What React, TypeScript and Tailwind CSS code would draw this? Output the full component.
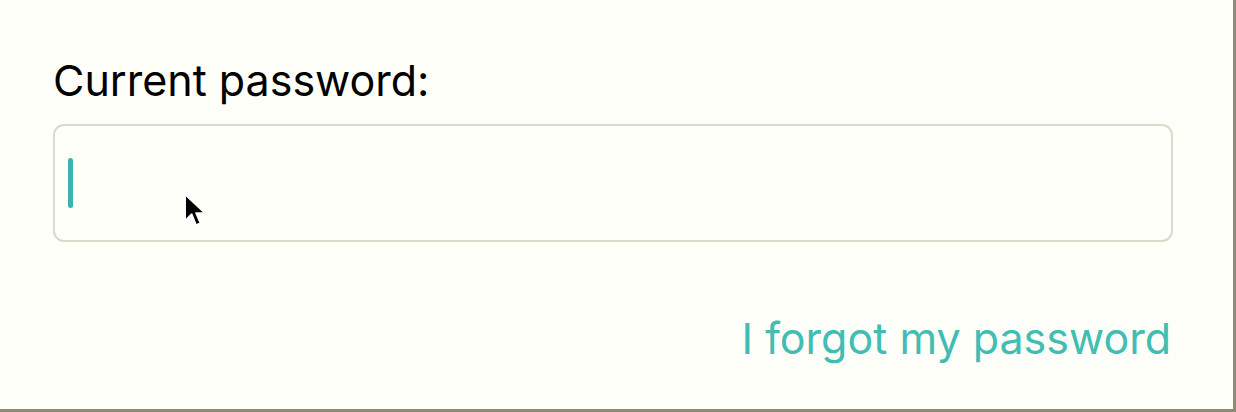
export default function App() {
  return (
    <div className="w-[1236px] h-[412px] bg-[#fffffa] border-r-[3px] border-b-[3px] border-[#8c8c78] font-['Inter','Noto_Sans',sans-serif] relative">
      <div className="pl-[53px] pr-[60px] pt-[54px] flex flex-col">
        <label className="text-[43px] leading-[52px] text-black">Current password:</label>
        <div className="mt-[18px] h-[118px] rounded-[11px] border-2 border-[#dadacb] flex items-center pl-[13px]">
          <div className="w-[5px] h-[50px] rounded-full bg-[#3cb5ad]" />
        </div>
        <div className="flex justify-end mt-[70px]">
          <a className="text-[43px] leading-[52px] text-[#41bdb3] pr-[2px]">I forgot my password</a>
        </div>
      </div>
      <svg className="absolute left-[183px] top-[193px]" width="26" height="40" viewBox="0 0 24 36">
        <path d="M2 1 L2 25 L8 19 L12 29 L16 27.5 L12 18 L20 18 Z" fill="#000" stroke="#fff" strokeWidth="1.5" strokeLinejoin="round" />
      </svg>
    </div>
  );
}
